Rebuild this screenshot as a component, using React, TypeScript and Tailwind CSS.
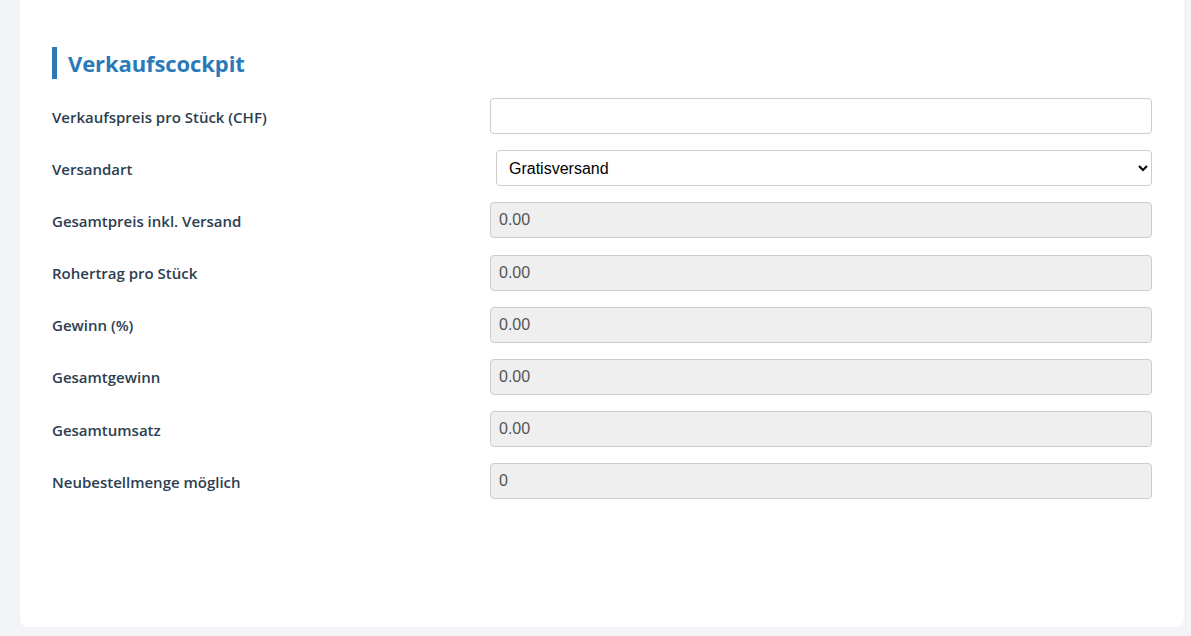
import React from "react";

const rows = [
  { label: "Gesamtpreis inkl. Versand", value: "0.00" },
  { label: "Rohertrag pro Stück", value: "0.00" },
  { label: "Gewinn (%)", value: "0.00" },
  { label: "Gesamtgewinn", value: "0.00" },
  { label: "Gesamtumsatz", value: "0.00" },
  { label: "Neubestellmenge möglich", value: "0" },
];

const labelCls =
  "text-[15px] font-semibold text-[#2c3e50] leading-none [font-family:'Open_Sans',sans-serif] pt-[2px]";

export default function App() {
  return (
    <div className="h-[636px] bg-[#f3f4f8] pl-5 pr-[7px] pb-[9px] overflow-hidden">
      <div className="h-full bg-white rounded-b-lg px-8 pt-[47px]">
        {/* Heading */}
        <div className="flex items-center h-8 mb-[19px]">
          <div className="w-[5px] h-8 bg-[#2a7ab9]" />
          <h2 className="ml-[11px] text-[22px] font-bold text-[#2a7ab9] [font-family:'Open_Sans',sans-serif] tracking-[-0.1px]">
            Verkaufscockpit
          </h2>
        </div>

        <div className="grid grid-cols-[438px_662px] gap-y-[16.2px]">
          <label className={`${labelCls} flex items-center h-9`}>
            Verkaufspreis pro Stück (CHF)
          </label>
          <input
            type="text"
            className="h-9 w-full border border-[#cccccc] rounded bg-white px-2 text-base [font-family:'Liberation_Sans',Arial,sans-serif]"
          />

          <label className={`${labelCls} flex items-center h-9`}>Versandart</label>
          <select
            defaultValue="Gratisversand"
            className="ml-[6px] h-9 w-[656px] border border-[#cccccc] rounded bg-white pl-2 pr-2 text-base text-black [font-family:'Liberation_Sans',Arial,sans-serif] appearance-auto"
          >
            <option>Gratisversand</option>
          </select>

          {rows.map((r) => (
            <React.Fragment key={r.label}>
              <label className={`${labelCls} flex items-center h-9`}>{r.label}</label>
              <input
                type="text"
                disabled
                value={r.value}
                readOnly
                className="h-9 w-full border border-[#cccccc] rounded bg-[#efefef] px-2 text-base text-[#555555] [font-family:'Liberation_Sans',Arial,sans-serif]"
              />
            </React.Fragment>
          ))}
        </div>
      </div>
    </div>
  );
}
